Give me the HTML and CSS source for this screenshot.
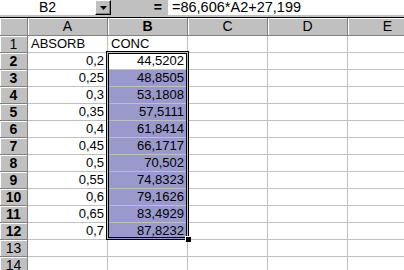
FILE: index.html
```html
<!DOCTYPE html>
<html lang="en">
  <head>
    <meta charset="UTF-8" />
    <title>Sheet1</title>
    <link rel="stylesheet" href="styles.css">
  </head>
  <body>
    <div class="formula-bar">
      <div class="name-box">B2</div>
      <div class="name-drop">
        <svg width="7" height="4" viewBox="0 0 7 4"><path d="M0 0h7L3.5 4z" fill="#000"/></svg>
      </div>
      <div class="eq-btn">=</div>
      <div class="formula-input">=86,606*A2+27,199</div>
    </div>
    <div class="sheet">
      <div class="corner"></div>
      <div class="col-head">A</div>
      <div class="col-head active">B</div>
      <div class="col-head">C</div>
      <div class="col-head">D</div>
      <div class="col-head">E</div>

      <div class="row-head">1</div>
      <div class="cell">ABSORB</div>
      <div class="cell">CONC</div>
      <div class="cell"></div><div class="cell"></div><div class="cell"></div>

      <div class="row-head active">2</div>
      <div class="cell num">0,2</div>
      <div class="cell num">44,5202</div>
      <div class="cell"></div><div class="cell"></div><div class="cell"></div>

      <div class="row-head active">3</div>
      <div class="cell num">0,25</div>
      <div class="cell num sel">48,8505</div>
      <div class="cell"></div><div class="cell"></div><div class="cell"></div>

      <div class="row-head active">4</div>
      <div class="cell num">0,3</div>
      <div class="cell num sel">53,1808</div>
      <div class="cell"></div><div class="cell"></div><div class="cell"></div>

      <div class="row-head active">5</div>
      <div class="cell num">0,35</div>
      <div class="cell num sel">57,5111</div>
      <div class="cell"></div><div class="cell"></div><div class="cell"></div>

      <div class="row-head active">6</div>
      <div class="cell num">0,4</div>
      <div class="cell num sel">61,8414</div>
      <div class="cell"></div><div class="cell"></div><div class="cell"></div>

      <div class="row-head active">7</div>
      <div class="cell num">0,45</div>
      <div class="cell num sel">66,1717</div>
      <div class="cell"></div><div class="cell"></div><div class="cell"></div>

      <div class="row-head active">8</div>
      <div class="cell num">0,5</div>
      <div class="cell num sel">70,502</div>
      <div class="cell"></div><div class="cell"></div><div class="cell"></div>

      <div class="row-head active">9</div>
      <div class="cell num">0,55</div>
      <div class="cell num sel">74,8323</div>
      <div class="cell"></div><div class="cell"></div><div class="cell"></div>

      <div class="row-head active">10</div>
      <div class="cell num">0,6</div>
      <div class="cell num sel">79,1626</div>
      <div class="cell"></div><div class="cell"></div><div class="cell"></div>

      <div class="row-head active">11</div>
      <div class="cell num">0,65</div>
      <div class="cell num sel">83,4929</div>
      <div class="cell"></div><div class="cell"></div><div class="cell"></div>

      <div class="row-head active">12</div>
      <div class="cell num">0,7</div>
      <div class="cell num sel">87,8232</div>
      <div class="cell"></div><div class="cell"></div><div class="cell"></div>

      <div class="row-head">13</div>
      <div class="cell"></div><div class="cell"></div>
      <div class="cell"></div><div class="cell"></div><div class="cell"></div>

      <div class="row-head">14</div>
      <div class="cell"></div><div class="cell"></div>
      <div class="cell"></div><div class="cell"></div><div class="cell"></div>

      <div class="selection"><span class="fill-handle"></span></div>
    </div>
  </body>
</html>
```
FILE: styles.css
```css
body {
  margin: 0;
  width: 404px;
  height: 270px;
  overflow: hidden;
  background: #c0c0c0;
  font-family: "Liberation Sans", Arial, sans-serif;
  font-size: 13px;
  color: #000;
}
.formula-bar {
  display: flex;
  height: 17px;
  background: #c0c0c0;
}
.name-box {
  width: 95px;
  height: 15px;
  background: #fff;
  line-height: 15px;
  text-align: center;
  font-size: 14px;
}
.name-drop {
  width: 16px;
  height: 15px;
  display: flex;
  align-items: center;
  justify-content: center;
  box-sizing: border-box;
  border-top: 1px solid #fff;
  border-left: 1px solid #fff;
  border-right: 1px solid #000;
  border-bottom: 1px solid #000;
  box-shadow: inset -1px -1px #808080;
}
.eq-btn {
  width: 57px;
  padding-right: 6px;
  box-sizing: border-box;
  text-align: right;
  font-weight: bold;
  font-size: 14px;
  line-height: 15px;
}
.formula-input {
  flex: 1;
  height: 15px;
  background: #fff;
  line-height: 15px;
  padding-left: 4px;
  font-size: 14.5px;
}
.sheet {
  position: relative;
  width: 404px;
  overflow: hidden;
  display: grid;
  grid-template-columns: 28px 80px 80px 80px 80px 80px;
  grid-template-rows: 18px repeat(14, 17px);
  background: #fff;
  border-top: 1px solid #000;
}
.corner,
.col-head,
.row-head {
  background: #c0c0c0;
  border-right: 1px solid #808080;
  border-bottom: 1px solid #808080;
  box-shadow: inset 1px 1px #fff;
  line-height: 16px;
  text-align: center;
  font-size: 14px;
}
.active {
  font-weight: bold;
}
.cell {
  border-right: 1px solid #c0c0c0;
  border-bottom: 1px solid #c0c0c0;
  line-height: 16px;
  padding: 0 3px;
  white-space: nowrap;
  overflow: hidden;
}
.num {
  text-align: right;
}
.sel {
  background: #9999cc;
}
.selection {
  position: absolute;
  left: 106px;
  top: 33px;
  width: 83px;
  height: 189px;
  box-sizing: border-box;
  border: 3px double #000;
  pointer-events: none;
}
.fill-handle {
  position: absolute;
  right: -5px;
  bottom: -5px;
  width: 5px;
  height: 5px;
  background: #000;
  border-left: 1px solid #fff;
  border-top: 1px solid #fff;
}
```
